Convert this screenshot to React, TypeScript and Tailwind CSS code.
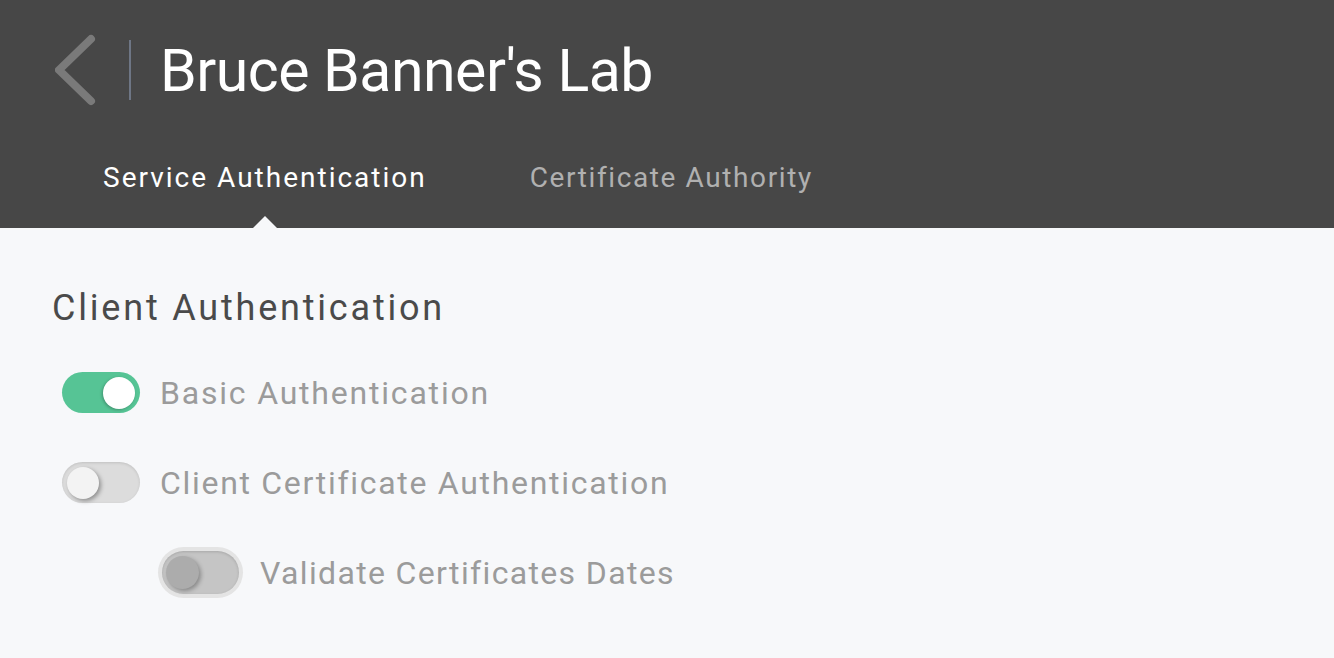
import React from "react";

function Toggle({ state }: { state: "on" | "off" | "disabled" }) {
  if (state === "on") {
    return (
      <div className="flex h-[41px] w-[78px] shrink-0 items-center justify-end rounded-full bg-[#56c495] pr-[5px]">
        <div className="h-[32px] w-[32px] rounded-full bg-white shadow-[-1px_1px_3px_rgba(0,0,0,0.25)]" />
      </div>
    );
  }
  if (state === "off") {
    return (
      <div className="flex h-[41px] w-[78px] shrink-0 items-center rounded-full bg-[#dcdcdc] pl-[5px] shadow-[inset_0_1px_3px_rgba(0,0,0,0.12)]">
        <div className="h-[32px] w-[32px] rounded-full bg-[#f3f3f3] shadow-[2px_2px_4px_rgba(0,0,0,0.35)]" />
      </div>
    );
  }
  return (
    <div className="flex h-[51px] w-[85px] shrink-0 items-center rounded-full bg-[#e4e4e4] p-[4px]">
      <div className="flex h-full w-full items-center rounded-full bg-[#c5c5c5] pl-[4px] shadow-[inset_0_1px_3px_rgba(0,0,0,0.15)]">
        <div className="h-[33px] w-[33px] rounded-full bg-[#acacac] shadow-[2px_2px_4px_rgba(0,0,0,0.3)]" />
      </div>
    </div>
  );
}

export default function App() {
  return (
    <div className="flex h-[658px] w-[1334px] flex-col overflow-hidden bg-[#f7f8fa] font-['Roboto',sans-serif]">
      <header className="flex h-[228px] shrink-0 flex-col bg-[#474747]">
        <div className="flex h-[140px] items-center pl-[55px]">
          <svg width="44" height="72" viewBox="0 0 44 72" className="shrink-0">
            <path d="M38 5 L6 36 L38 67" stroke="#7a7a7a" strokeWidth="8" strokeLinecap="round" strokeLinejoin="round" fill="none" transform="translate(-2,0)" />
          </svg>
          <div className="ml-[30px] h-[60px] w-[2px] bg-[#6e7685]" />
          <h1 className="ml-[29px] text-[59px] font-normal leading-none tracking-[-0.5px] text-white">
            Bruce Banner's Lab
          </h1>
        </div>
        <nav className="flex flex-1 items-start pl-[103px] pt-[22px]">
          <div className="relative flex h-[66px] flex-col">
            <span className="text-[28px] leading-[32px] tracking-[2px] text-white">Service Authentication</span>
            <div className="absolute bottom-0 left-1/2 h-0 w-0 -translate-x-1/2 border-x-[12px] border-b-[12px] border-x-transparent border-b-[#f7f8fa]" />
          </div>
          <span className="ml-[103px] text-[28px] leading-[32px] tracking-[1.6px] text-[#b0b0b0]">Certificate Authority</span>
        </nav>
      </header>
      <main className="flex flex-col pl-[52px] pt-[58px]">
        <h2 className="text-[36px] font-normal leading-[44px] tracking-[2.8px] text-[#4a4a4a]">Client Authentication</h2>
        <div className="mt-[42px] flex items-center pl-[10px]">
          <Toggle state="on" />
          <span className="ml-[20px] text-[32px] leading-none tracking-[1.8px] text-[#9b9b9b]">Basic Authentication</span>
        </div>
        <div className="mt-[49px] flex items-center pl-[10px]">
          <Toggle state="off" />
          <span className="ml-[20px] text-[32px] leading-none tracking-[1.7px] text-[#9b9b9b]">Client Certificate Authentication</span>
        </div>
        <div className="mt-[44px] flex items-center pl-[106px]">
          <Toggle state="disabled" />
          <span className="ml-[17px] text-[32px] leading-none tracking-[1.35px] text-[#9b9b9b]">Validate Certificates Dates</span>
        </div>
      </main>
    </div>
  );
}
